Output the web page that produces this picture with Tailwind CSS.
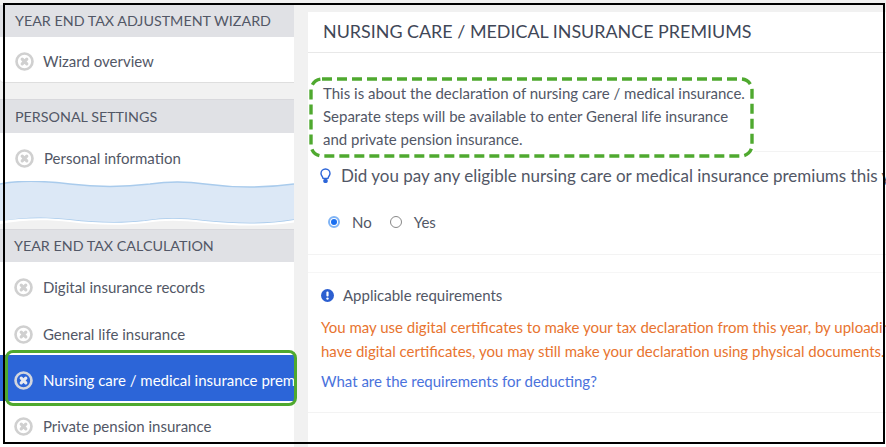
<!DOCTYPE html>
<html><head><meta charset="utf-8"><script src="https://cdn.jsdelivr.net/npm/@tailwindcss/browser@4"></script></head>
<body class="w-[886px] h-[447px] overflow-hidden bg-white relative font-['Lato','Liberation_Sans',sans-serif] text-[#525766]">
<div class="flex h-[447px] pt-[5px] bg-[#f1f1f1] w-[886px]">
  <aside class="w-[294px] shrink-0 flex flex-col text-[15px]">
    <div class="h-[32px] shrink-0 bg-[#e0e1e5] pl-[15px] flex items-center text-[14.3px]">YEAR END TAX ADJUSTMENT WIZARD</div>
    <div class="h-[46px] shrink-0 bg-white border-b border-[#dedede] pl-[15px] pt-[4px] flex items-center gap-[10px] rounded-bl-sm">
      <svg class="w-[19px] h-[19px] shrink-0" viewBox="0 0 20 20"><circle cx="10" cy="10" r="8.4" fill="none" stroke="#d0d0d0" stroke-width="2.8"/><path d="M7.6 7.6l4.8 4.8M12.4 7.6l-4.8 4.8" stroke="#d0d0d0" stroke-width="3.4" stroke-linecap="round"/></svg>
      <span class="ml-[-1px]">Wizard overview</span></div>
    <div class="h-[16px] shrink-0"></div>
    <div class="h-[34px] shrink-0 bg-[#e0e1e5] border-t border-[#d8d8dc] pl-[15px] flex items-center text-[14.3px]">PERSONAL SETTINGS</div>
    <div class="h-[48px] shrink-0 bg-white pl-[15px] pt-[2px] flex items-center gap-[10px]">
      <svg class="w-[19px] h-[19px] shrink-0" viewBox="0 0 20 20"><circle cx="10" cy="10" r="8.4" fill="none" stroke="#d0d0d0" stroke-width="2.8"/><path d="M7.6 7.6l4.8 4.8M12.4 7.6l-4.8 4.8" stroke="#d0d0d0" stroke-width="3.4" stroke-linecap="round"/></svg>
      <span>Personal information</span></div>
    <svg class="block shrink-0" width="294" height="48" viewBox="0 0 294 48">
      <rect width="294" height="48" fill="#f1f1f1"/>
      <path d="M0 0H294V5C270 9 235 8 205 3C185 0 170 0 150 3C125 6 95 6 70 3C45 0 20 -1 0 3Z" fill="#fff"/>
      <path d="M0 3C20 -1 45 0 70 3C95 6 125 6 150 3C170 0 185 0 205 3C235 7 265 7 294 3V39C265 44 235 43 205 40C180 37 165 37 145 40C120 43 95 42 70 39C45 36 20 37 0 41Z" fill="#dce8f6"/>
      <path d="M0 3C20 -1 45 0 70 3C95 6 125 6 150 3C170 0 185 0 205 3C235 7 265 7 294 3" fill="none" stroke="#a9cbec" stroke-width="1.5"/>
      <path d="M0 41C20 37 45 36 70 39C95 42 120 43 145 40C165 37 180 37 205 40C235 43 265 44 294 39" fill="none" stroke="#a9cbec" stroke-width="1.5"/>
      <path d="M0 40C20 37 45 36 70 39C95 42 120 43 145 40C165 37 180 37 205 40C235 43 265 44 294 39V41.5C265 46 235 45 205 42C180 39 165 39 145 42C120 45 95 44 70 41C45 38 20 39 0 43Z" fill="#fff"/>
    </svg>
    <div class="h-[33px] shrink-0 bg-[#e0e1e5] border-t border-[#d8d8dc] pl-[14px] flex items-center text-[14.3px]">YEAR END TAX CALCULATION</div>
    <div class="h-[47px] shrink-0 bg-white pl-[14px] pt-[4px] flex items-center gap-[10px]">
      <svg class="w-[19px] h-[19px] shrink-0" viewBox="0 0 20 20"><circle cx="10" cy="10" r="8.4" fill="none" stroke="#d0d0d0" stroke-width="2.8"/><path d="M7.6 7.6l4.8 4.8M12.4 7.6l-4.8 4.8" stroke="#d0d0d0" stroke-width="3.4" stroke-linecap="round"/></svg>
      <span>Digital insurance records</span></div>
    <div class="h-[46px] shrink-0 bg-white pl-[14px] pt-[4px] flex items-center gap-[10px]">
      <svg class="w-[19px] h-[19px] shrink-0" viewBox="0 0 20 20"><circle cx="10" cy="10" r="8.4" fill="none" stroke="#d0d0d0" stroke-width="2.8"/><path d="M7.6 7.6l4.8 4.8M12.4 7.6l-4.8 4.8" stroke="#d0d0d0" stroke-width="3.4" stroke-linecap="round"/></svg>
      <span>General life insurance</span></div>
    <div class="h-[46px] shrink-0 bg-[#2c65d8] text-white pl-[14px] pt-[4px] flex items-center gap-[10px] overflow-hidden whitespace-nowrap">
      <svg class="w-[19px] h-[19px] shrink-0" viewBox="0 0 20 20"><circle cx="10" cy="10" r="8.4" fill="none" stroke="#d3d6de" stroke-width="2.8"/><path d="M7.6 7.6l4.8 4.8M12.4 7.6l-4.8 4.8" stroke="#e8eaf0" stroke-width="3.4" stroke-linecap="round"/></svg>
      <span>Nursing care / medical insurance premiums</span></div>
    <div class="h-[46px] shrink-0 bg-white pl-[14px] pt-[4px] flex items-center gap-[10px]">
      <svg class="w-[19px] h-[19px] shrink-0" viewBox="0 0 20 20"><circle cx="10" cy="10" r="8.4" fill="none" stroke="#d0d0d0" stroke-width="2.8"/><path d="M7.6 7.6l4.8 4.8M12.4 7.6l-4.8 4.8" stroke="#d0d0d0" stroke-width="3.4" stroke-linecap="round"/></svg>
      <span>Private pension insurance</span></div>
  </aside>
  <main class="ml-[14px] mt-[7px] w-[578px] shrink-0 bg-white overflow-hidden whitespace-nowrap">
    <div class="h-[41px] border-b border-[#e8e8e8] pl-[15px] pb-[2px] flex items-center text-[17.9px] text-[#3f4757]">NURSING CARE / MEDICAL INSURANCE PREMIUMS</div>
    <div class="relative ml-[1px] mt-[24px] w-[445px] h-[81px] pl-[14px] pt-[5px] text-[15px] leading-[23px]">
      <svg class="absolute left-0 top-0" width="445" height="81" viewBox="0 0 445 81"><rect x="2" y="2" width="441" height="77" rx="11" fill="none" stroke="#4fa92f" stroke-width="3.4" stroke-dasharray="10 5"/></svg>
      <p>This is about the declaration of nursing care / medical insurance.</p>
      <p>Separate steps will be available to enter General life insurance</p>
      <p>and private pension insurance.</p>
    </div>
    <div class="border-t border-[#f3f3f3] mt-[-7px] ml-[446px]"></div>
    <div class="mt-[14px] pl-[12px] h-[20px] flex items-center gap-[10px] text-[17px]">
      <svg class="w-[11px] h-[16px] shrink-0" viewBox="0 0 11 16"><path d="M5.5 1C3 1 1 3 1 5.4c0 2 1.5 3 2 5h5c.5-2 2-3 2-5C10 3 8 1 5.5 1z" fill="#fff" stroke="#2c65d8" stroke-width="1.4"/><rect x="3.3" y="11" width="4.4" height="4" rx="1.4" fill="#2c65d8"/></svg>
      <span>Did you pay any eligible nursing care or medical insurance premiums this year?</span></div>
    <div class="mt-[26px] pl-[20px] h-[20px] flex items-center text-[15px]">
      <span class="w-[12px] h-[12px] rounded-full border-[2px] border-[#80b4f5] flex items-center justify-center"><span class="w-[6px] h-[6px] rounded-full bg-[#1a6ff0]"></span></span>
      <span class="ml-[12px]">No</span>
      <span class="ml-[18px] w-[12px] h-[12px] rounded-full border border-[#888]"></span>
      <span class="ml-[12px]">Yes</span></div>
    <div class="mt-[22px] border-t border-[#f3f3f3]"></div>
    <div class="mt-[17px] border-t border-[#f6f6f6]"></div>
    <div class="mt-[13px] pl-[13px] h-[18px] flex items-center gap-[9px] text-[15px]">
      <svg class="w-[13px] h-[13px] shrink-0" viewBox="0 0 13 13"><circle cx="6.5" cy="6.5" r="6.5" fill="#2c5fd0"/><rect x="5.4" y="2.5" width="2.2" height="5" rx="1" fill="#fff"/><circle cx="6.5" cy="9.6" r="1.2" fill="#fff"/></svg>
      <span>Applicable requirements</span></div>
    <div class="mt-[11px] pl-[13px] text-[15px] leading-[24px] text-[#e8742f]">
      <p>You may use digital certificates to make your tax declaration from this year, by uploading them here. If you don't</p>
      <p>have digital certificates, you may still make your declaration using physical documents.</p>
    </div>
    <div class="mt-[6px] pl-[13px] text-[15px] leading-[24px] text-[#4a72dc]">What are the requirements for deducting?</div>
    <div class="mt-[19px] border-t border-[#f3f3f3]"></div>
  </main>
</div>
<div class="absolute left-[5px] top-[350px] w-[292px] h-[56px] border-[3px] border-[#4fa92f] rounded-[8px]"></div>
<div class="absolute left-[3px] top-[3px] w-[882px] h-[441px] border-[2px] border-black"></div>
</body></html>
